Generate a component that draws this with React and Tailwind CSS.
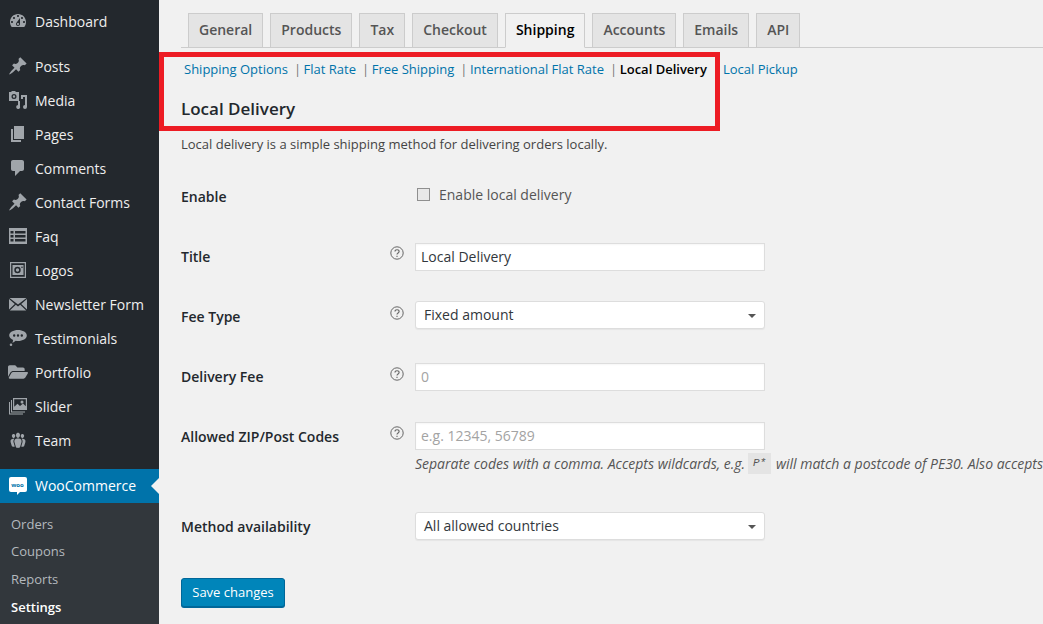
import React from 'react';
import { FaFolderOpen } from 'react-icons/fa';

const Dash = ({ d, className = '' }) => (
  <svg viewBox="0 0 20 20" className={`w-5 h-5 fill-current ${className}`}><path d={d} /></svg>
);

const pin = 'M10.44 3.02l1.82-1.82 6.36 6.35-1.83 1.82c-1.05-.68-2.48-.57-3.41.36l-.75.75c-.92.93-1.04 2.35-.35 3.41l-1.83 1.82-2.41-2.41-2.8 2.79c-.42.42-3.38 2.71-3.8 2.29s1.86-3.39 2.28-3.81l2.79-2.79L4.1 9.36l1.83-1.82c1.05.69 2.48.57 3.4-.36l.75-.75c.93-.92 1.05-2.35.36-3.41z';

const icons = {
  dashboard: <Dash d="M3.76 16h12.48c1.1-1.37 1.76-3.11 1.76-5 0-4.42-3.58-8-8-8s-8 3.58-8 8c0 1.89.66 3.63 1.76 5zM10 4c.55 0 1 .45 1 1s-.45 1-1 1-1-.45-1-1 .45-1 1-1zM6 6c.55 0 1 .45 1 1s-.45 1-1 1-1-.45-1-1 .45-1 1-1zm8 0c.55 0 1 .45 1 1s-.45 1-1 1-1-.45-1-1 .45-1 1-1zm-5.37 5.55L12 7v6c0 1.1-.9 2-2 2s-2-.9-2-2c0-.57.24-1.08.63-1.45zM4 10c.55 0 1 .45 1 1s-.45 1-1 1-1-.45-1-1 .45-1 1-1zm12 0c.55 0 1 .45 1 1s-.45 1-1 1-1-.45-1-1 .45-1 1-1zm-5 3c0-.55-.45-1-1-1s-1 .45-1 1 .45 1 1 1 1-.45 1-1z" />,
  pin: <Dash d={pin} />,
  media: <Dash d="M1 2h2l1-1h3l1 1h3v9H1V2zm5 2a2.5 2.5 0 1 0 0 5 2.5 2.5 0 0 0 0-5zm0 1.3a1.2 1.2 0 1 1 0 2.4 1.2 1.2 0 0 1 0-2.4zM13 5h6v12a2 2 0 1 1-2-2V7h-2v2h-2V5zM12 11v5.2a2 2 0 1 1-2-1.2v-4h2z" />,
  pages: <Dash d="M6 15V2h10v13H6zm-1 1h8v2H3V5h2v11z" />,
  comments: <Dash d="M5 2h9c1.1 0 2 .9 2 2v7c0 1.1-.9 2-2 2h-2l-5 5v-5H5c-1.1 0-2-.9-2-2V4c0-1.1.9-2 2-2z" />,
  faq: <Dash d="M1 2h18v16H1V2zm1.5 3v2.5h3V5h-3zm4.5 0v2.500h10.500V5H7zM2.500 9v2.500h3V9h-3zM7 9v2.500h10.500V9H7zm-4.500 4v2.500h3V13h-3zm4.500 0v2.500h10.500V13H7z" />,
  logos: <Dash d="M2 2h16v16H2V2zm1.200 1.200v13.600h13.600V3.200H3.200zM4.500 5h11v10h-11V5zm5 1.800a3.200 3.200 0 1 0 0 6.400 3.200 3.200 0 0 0 0-6.400zm0 1.500a1.700 1.700 0 1 1 0 3.400 1.700 1.700 0 0 1 0-3.400zM14 6.500a.8.8 0 1 0 0 1.600.8.8 0 0 0 0-1.600z" />,
  mail: <Dash d="M1.500 4h17l-8.500 6.500L1.500 4zM1 5l5.800 5L1 15.500V5zm18 0v10.500L13.200 10 19 5zM7.800 10.800l2.200 1.800 2.200-1.800 6 5.700H1.800l6-5.700z" />,
  chat: <Dash d="M10 2c4.700 0 8.800 2.300 8.800 5.500S14.700 13 10 13c-.8 0-1.500 0-2.200-.2L4.500 15l.6-3.100C2.800 11 1.200 9.400 1.200 7.500 1.200 4.300 5.300 2 10 2zM6.200 6.300a1.200 1.200 0 1 0 0 2.400 1.200 1.200 0 0 0 0-2.400zm3.800 0a1.200 1.200 0 1 0 0 2.400 1.200 1.200 0 0 0 0-2.400zm3.800 0a1.200 1.200 0 1 0 0 2.400 1.200 1.200 0 0 0 0-2.400zM3 15.500a1.300 1.300 0 1 1 0 2.600 1.300 1.300 0 0 1 0-2.600z" />,
  folder: <FaFolderOpen className="w-5 h-5" />,
  slider: <Dash d="M5 2h14v12H5V2zm1.200 1.200v7.500l3.300-3 2.500 2.300 3-2.500 2.800 2.800V3.200H6.200zM14 4.500a1.500 1.500 0 1 1 0 3 1.500 1.500 0 0 1 0-3zM3 4h1v11.500h13v1H3V4zM1 6h1v11.500h13v1H1V6z" />,
  team: <Dash d="M8.03 4.46c-.29 1.28.55 3.46 1.97 3.46 1.41 0 2.25-2.18 1.96-3.46-.22-.98-1.08-1.63-1.96-1.63-.89 0-1.74.65-1.97 1.63zm-4.13.9c-.25 1.08.47 2.93 1.67 2.93s1.92-1.85 1.67-2.93c-.19-.83-.92-1.39-1.67-1.39s-1.48.56-1.67 1.39zm8.86 0c-.25 1.08.47 2.93 1.66 2.93 1.2 0 1.92-1.85 1.67-2.93-.19-.83-.92-1.39-1.67-1.39-.74 0-1.47.56-1.66 1.39zm-.59 11.43l1.25-4.3C14.2 10 12.71 8.47 10 8.47c-2.72 0-4.21 1.53-3.44 4.02l1.26 4.3C8.05 17.51 9 18 10 18c.98 0 1.94-.49 2.17-1.21zm-6.1-7.63c-.49.67-.96 1.83-.42 3.59l1.12 3.79c-.34.2-.77.31-1.2.31-.85 0-1.65-.41-1.85-1.03l-1.07-3.65c-.65-2.11.61-3.4 2.92-3.4.27 0 .54.02.79.06-.1.1-.2.22-.29.33zm8.35-.39c2.31 0 3.58 1.29 2.92 3.4l-1.07 3.65c-.2.62-1 1.03-1.85 1.03-.43 0-.86-.11-1.2-.31l1.11-3.77c.55-1.78.08-2.94-.42-3.61-.08-.11-.18-.23-.28-.33.25-.04.51-.06.79-.06z" />,
};

const menu = [
  ['Posts', 'pin'], ['Media', 'media'], ['Pages', 'pages'], ['Comments', 'comments'],
  ['Contact Forms', 'pin'], ['Faq', 'faq'], ['Logos', 'logos'], ['Newsletter Form', 'mail'],
  ['Testimonials', 'chat'], ['Portfolio', 'folder'], ['Slider', 'slider'], ['Team', 'team'],
];

const tabs = ['General', 'Products', 'Tax', 'Checkout', 'Shipping', 'Accounts', 'Emails', 'API'];
const links = ['Shipping Options', 'Flat Rate', 'Free Shipping', 'International Flat Rate'];

const MenuItem = ({ label, icon }) => (
  <div className="flex items-center h-[34px] text-[14px] text-[#eeeeee]">
    <span className="w-[35px] flex justify-center px-[1px] text-[#a0a5aa] shrink-0">{icons[icon]}</span>
    {label}
  </div>
);

const Help = () => (
  <svg viewBox="0 0 14 14" className="w-[14px] h-[14px] text-[#666]" fill="none" stroke="currentColor">
    <circle cx="7" cy="7" r="6.2" strokeWidth="1" />
    <path d="M5 5.600c0-2.400 4.100-2.400 4.100 0 0 1.400-2.100 1.500-2.100 3" strokeWidth="1.100" />
    <path d="M7 9.700v1.200" strokeWidth="1.100" />
  </svg>
);

const Caret = () => (
  <span className="absolute right-[8px] top-[12px] border-x-[4px] border-x-transparent border-t-[4px] border-t-[#555]" />
);

const Row = ({ label, help, helpClass = 'pt-[4px]', labelClass = '', className = '', children }) => (
  <div className={`flex ${className}`}>
    <div className={`w-[209px] shrink-0 text-[14px] font-semibold text-[#23282d] ${labelClass}`}>{label}</div>
    <div className={`w-[25px] shrink-0 ${helpClass}`}>{help && <Help />}</div>
    <div className="min-w-0 flex-1">{children}</div>
  </div>
);

const Field = ({ value, muted }) => (
  <div className={`w-[350px] h-[28px] bg-white border border-[#dddddd] shadow-[inset_0_1px_2px_rgba(0,0,0,0.04)] pl-[5px] text-[14px] leading-[26px] ${muted ? 'text-[#a3a3a3]' : 'text-[#32373c]'}`}>
    {value}
  </div>
);

const Select = ({ value }) => (
  <div className="relative w-[350px] h-[28px] bg-white border border-[#dddddd] rounded-[3px] shadow-[0_1px_1px_rgba(0,0,0,0.05)] pl-[8px] text-[14px] leading-[26px] text-[#32373c]">
    {value}
    <Caret />
  </div>
);

export default function App() {
  return (
    <div
      className="relative flex w-[1043px] h-[624px] overflow-hidden bg-[#f1f1f1] text-[13px] text-[#444444]"
      style={{ fontFamily: '"Open Sans", "Noto Sans", sans-serif' }}
    >
      <aside className="w-[159px] shrink-0 bg-[#23282d] pt-[4px]">
        <MenuItem label="Dashboard" icon="dashboard" />
        <div className="h-[11px]" />
        {menu.map(([label, icon]) => <MenuItem key={label} label={label} icon={icon} />)}
        <div className="relative flex items-center h-[34px] mt-[12px] pb-[1px] bg-[#0073aa] text-[14px] text-white">
          <span className="w-[35px] flex justify-center shrink-0">
            <span className="relative flex items-center justify-center w-[18px] h-[15px] mb-[2px] rounded-[2px] bg-white text-[#0073aa] text-[6px] font-bold leading-none">
              woo
              <span className="absolute left-[8px] top-[15px] border-l-[3px] border-l-white border-b-[3px] border-b-transparent" />
            </span>
          </span>
          WooCommerce
          <span className="absolute right-0 top-[9px] border-y-[8px] border-y-transparent border-r-[8px] border-r-[#f1f1f1]" />
        </div>
        <div className="h-[121px] bg-[#32373c] pt-[7px] pl-[11px] text-[13px] text-[#b4b9be]">
          <div className="h-[28px] leading-[28px]">Orders</div>
          <div className="h-[27px] leading-[27px]">Coupons</div>
          <div className="h-[28px] leading-[28px]">Reports</div>
          <div className="h-[28px] leading-[28px] font-semibold text-white">Settings</div>
        </div>
      </aside>

      <main className="flex-1 min-w-0 pl-[22px] overflow-hidden">
        <div className="flex gap-[7px] h-[48px] pt-[13px] pl-[7px] border-b border-[#cccccc]">
          {tabs.map(tab => (
            <div
              key={tab}
              className={`h-[35px] px-[10px] border border-[#cccccc] text-[14px] font-semibold leading-[32px] ${
                tab === 'Shipping'
                  ? 'bg-[#f1f1f1] border-b-[#f1f1f1] text-black'
                  : 'bg-[#e4e4e4] text-[#555555]'
              }`}
            >
              {tab}
            </div>
          ))}
        </div>

        <div className="flex items-center h-[18px] mt-[13px] pl-[3px] whitespace-nowrap">
          {links.map(link => (
            <span key={link} className="flex">
              <span className="text-[#0073aa]">{link}</span>
              <span className="ml-[6px] mr-[2.5px] text-[#777777]">|</span>
            </span>
          ))}
          <span className="font-semibold text-black">Local Delivery</span>
          <span className="ml-[16px] text-[#0073aa]">Local Pickup</span>
        </div>

        <h2 className="mt-[18px] text-[17px] leading-[24px] font-semibold text-[#23282d]">Local Delivery</h2>
        <p className="mt-[14px] leading-[18px]">Local delivery is a simple shipping method for delivering orders locally.</p>

        <Row label="Enable" labelClass="leading-[20px]" className="mt-[34px]">
          <div className="flex items-center h-[18px] -mt-[2px] text-[14px] text-[#555555]">
            <span className="w-[13px] h-[13px] ml-[2px] mr-[9px] border border-[#8f8f8f] bg-[#e8e8e8]" />
            Enable local delivery
          </div>
        </Row>

        <Row label="Title" help helpClass="pt-[3px]" labelClass="leading-[28px]" className="mt-[36px]">
          <Field value="Local Delivery" />
        </Row>

        <Row label="Fee Type" help helpClass="pt-[5px]" labelClass="leading-[32px]" className="mt-[30px]">
          <Select value="Fixed amount" />
        </Row>

        <Row label="Delivery Fee" help labelClass="leading-[28px]" className="mt-[30px]">
          <Field value="0" muted />
        </Row>

        <Row label="Allowed ZIP/Post Codes" help labelClass="leading-[30px]" className="mt-[31px]">
          <Field value="e.g. 12345, 56789" muted />
          <div className="mt-[3px] h-[21px] flex items-center text-[14px] italic whitespace-nowrap text-[#555555]">
            Separate codes with a comma. Accepts wildcards, e.g.
            <code className="ml-[3px] mr-[5px] h-[21px] w-[24px] text-center bg-[#e4e4e4] text-[11px] italic leading-[21px] text-[#555555]">P*</code>
            will match a postcode of PE30. Also accepts
          </div>
        </Row>

        <Row label="Method availability" labelClass="leading-[30px]" className="mt-[38px]">
          <Select value="All allowed countries" />
        </Row>

        <button className="mt-[36px] w-[104px] h-[29px] pb-[2px] rounded-[3px] bg-[#0085ba] border border-[#006799] shadow-[0_1px_0_#006799] text-[13px] leading-[24px] text-white">
          Save changes
        </button>
      </main>

      {/* red annotation drawn over the page */}
      <div className="absolute left-[159px] top-[52px] w-[561px] h-[79px] border-[5px] border-[#ed1c24] pointer-events-none" />
    </div>
  );
}
